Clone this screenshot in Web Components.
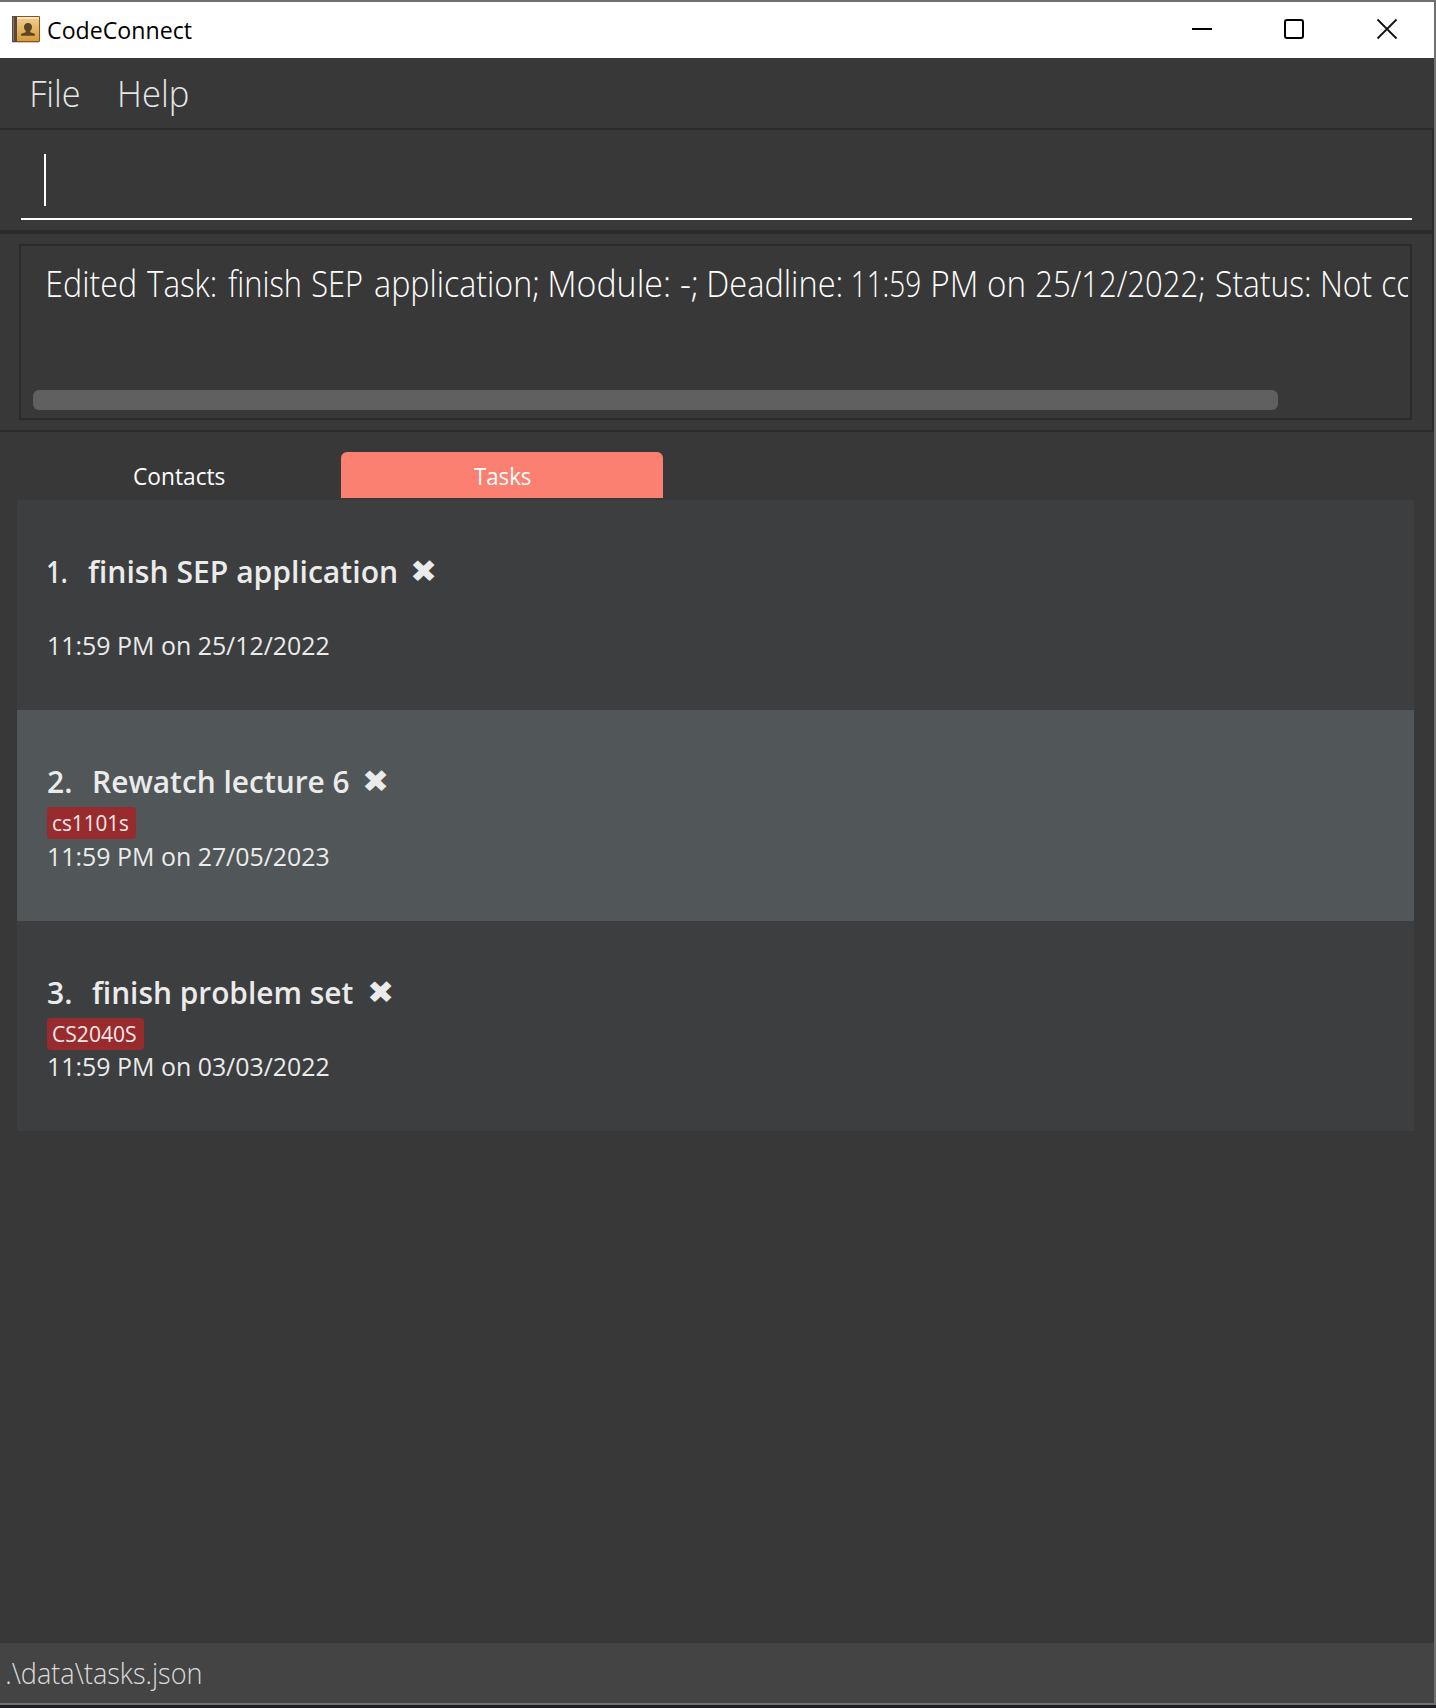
<!DOCTYPE html>
<html lang="en">
<head>
<meta charset="utf-8">
<title>CodeConnect</title>
<style>
html,body{margin:0;height:100%;background:#383838;overflow:hidden}
body{font-family:"Open Sans","Noto Sans",sans-serif}
</style>
</head>
<body>
<code-connect></code-connect>
<script>
const make = (name, html, init) => customElements.define(name, class extends HTMLElement {
  constructor(){ super(); this.attachShadow({mode:'open'}).innerHTML = html; }
  connectedCallback(){ if (init) init.call(this, this.shadowRoot); }
});

/* One line of text whose inked glyphs span exactly the width given in "span". */
make('ink-text', `<style>
:host{display:block;flex:none;white-space:nowrap}
span{display:inline-block;transform-origin:0 50%}
</style><span><slot></slot></span>`, function(root){
  const cs = getComputedStyle(this), c = document.createElement('canvas').getContext('2d');
  c.font = `${cs.fontWeight} ${cs.fontSize} ${cs.fontFamily}`;
  const m = c.measureText(this.textContent);
  const k = this.getAttribute('span') / (m.actualBoundingBoxLeft + m.actualBoundingBoxRight);
  this.style.width = this.getAttribute('span') + 'px';
  root.querySelector('span').style.transform = `translateX(${m.actualBoundingBoxLeft * k}px) scaleX(${k})`;
});

make('title-bar', `<style>
:host{display:flex;align-items:center;height:56px;background:#fff;color:#000;box-sizing:border-box;padding:0 36px 0 11px;font-size:24px;line-height:36px}
.app{margin-right:7px;display:block}
.controls{display:flex;margin-left:auto;gap:71px;margin-top:-2px}
.controls svg{display:block}
.controls svg:first-child{margin-right:-1px}
</style>
<svg class="app" width="30" height="30" viewBox="0 0 30 30">
<defs><linearGradient id="g" x2="0" y2="1"><stop stop-color="#edc98a"/><stop offset=".5" stop-color="#e3b35f"/><stop offset="1" stop-color="#d69b3b"/></linearGradient></defs>
<path d="M1 27h27v1H2z" fill="#c9c9c9"/>
<rect x="1" y="1" width="28" height="26" rx="1" fill="#83551f"/>
<rect x="6" y="2" width="22" height="2" fill="#f7e5bd"/>
<rect x="6" y="4" width="22" height="22" fill="url(#g)"/>
<rect x="1" y="1" width="5" height="26" fill="#5b473b"/><rect x="2" y="2" width="1" height="24" fill="#8d7768"/>
<path d="M17 8c2.600 0 4 1.700 4 4 0 1.700-.7 3.100-1.800 4v1.200l3.800 1.400c.8.300 1 .9 1 2.200H10c0-1.300.2-1.900 1-2.200l3.800-1.400V16c-1.100-.9-1.800-2.300-1.800-4 0-2.300 1.400-4 4-4z" fill="#5c4427"/>
</svg>
<ink-text span="143.500">CodeConnect</ink-text>
<div class="controls">
<svg width="22" height="22" viewBox="0 0 22 22"><path d="M1 11h20" stroke="#000" stroke-width="2"/></svg>
<svg width="22" height="22" viewBox="0 0 22 22"><rect x="2" y="2" width="18" height="18" rx="2" fill="none" stroke="#000" stroke-width="2"/></svg>
<svg width="22" height="22" viewBox="0 0 22 22"><path d="M1.500 1.500l19 19M20.500 1.500l-19 19" stroke="#111" stroke-width="1.800"/></svg>
</div>`);

make('menu-bar', `<style>
:host{display:flex;align-items:center;height:70px;box-sizing:border-box;padding:1px 32px 0 31.500px;gap:41px;font-size:36px;line-height:50px;font-weight:300;color:#e6e6e6}
</style><ink-text span="47">File</ink-text><ink-text span="68">Help</ink-text>`);

make('command-box', `<style>
:host{display:block;height:104px;box-sizing:border-box;border:solid #2b2b2b;border-width:2px 2px 2px 0;padding:0 20px 0 21px}
.field{height:90px;box-sizing:border-box;border-bottom:2px solid #fff;padding:24px 0 0 23px}
.caret{width:2px;height:52px;background:#fff}
</style><div class="field"><div class="caret"></div></div>`);

make('result-display', `<style>
:host{display:block;height:200px;box-sizing:border-box;border:solid #2b2b2b;border-width:2px 2px 2px 0;padding:10px 20px 10px 19px}
.box{height:176px;box-sizing:border-box;border:2px solid #2b2b2b;padding:13px 2px 8px 12px;display:flex;flex-direction:column;justify-content:space-between}
.line{display:flex;gap:12.500px;overflow:hidden;padding-left:14.500px;font-size:36px;line-height:50px;font-weight:300;color:#fff}
.thumb{width:1245px;height:20px;border-radius:6px;background:#606060}
</style><div class="box"><div class="line">
<ink-text span="87">Edited</ink-text> <ink-text span="68">Task:</ink-text> <ink-text span="72">finish</ink-text> <ink-text span="50">SEP</ink-text> <ink-text span="162.500">application;</ink-text> <ink-text span="146.500">Module: -;</ink-text> <ink-text span="132">Deadline:</ink-text> <ink-text span="67">11:59</ink-text> <ink-text span="91">PM on</ink-text> <ink-text span="167.500">25/12/2022;</ink-text> <ink-text span="156">Status: Not</ink-text> <ink-text span="147" style="margin-left:-1.500px">completed</ink-text>
</div><div class="thumb"></div></div>`);

make('tab-item', `<style>
:host{display:flex;align-items:center;justify-content:center;height:46px;box-sizing:border-box;padding-top:2px;border-radius:6px 6px 0 0;font-size:24px;line-height:36px;color:#fff}
:host([selected]){background:#fb8072}
</style><slot></slot>`);

make('tab-strip', `<style>
:host{display:flex;padding:20px 0 2px 17px}
.a{width:324px}.b{width:322px}
</style><tab-item class="a"><ink-text span="91">Contacts</ink-text></tab-item><tab-item class="b" selected><ink-text span="57">Tasks</ink-text></tab-item>`);

make('task-card', `<style>
:host{display:block;height:210px;box-sizing:border-box;padding:49px 0 0 30px;background:#3c3e3f;color:#ebebeb}
:host([alt]){height:211px;background:#515658}
.title{display:flex;height:44px;line-height:44px;font-size:31px;font-weight:600;padding-left:1px}
.mark{margin-left:16px;font-family:"DejaVu Sans",sans-serif;font-weight:400}
:host([alt]) .mark{margin-left:15px}
.tags{display:flex;height:32px;margin-top:4px}
.date{font-size:26px;line-height:32px;padding-left:2px}
:host([alt]) .date{padding-top:1px}
</style>
<div class="title"><slot name="num"></slot><slot name="name"></slot><ink-text class="mark" span="23">✖</ink-text></div>
<div class="tags"><slot name="tag"></slot></div>
<div class="date"><slot name="date"></slot></div>`);

make('module-tag', `<style>
:host{display:block;height:32px;border-radius:4px;background:#992b2e;color:#f3e9e9;font-size:22px;line-height:31px;padding:0 7px 0 6px}
</style><slot></slot>`);

make('task-list', `<style>
:host{display:block;width:1397px;margin-left:17px;flex:1}
ink-text[slot=name]{margin-left:21px}
task-card[alt] ink-text[slot=name]{margin-left:23px}
</style>
<task-card><ink-text slot="num" span="18.500">1.</ink-text><ink-text slot="name" span="308.500">finish SEP application</ink-text><ink-text slot="date" span="280">11:59 PM on 25/12/2022</ink-text></task-card>
<task-card alt><ink-text slot="num" span="23">2.</ink-text><ink-text slot="name" span="255">Rewatch lecture 6</ink-text><module-tag slot="tag"><ink-text span="75.500">cs1101s</ink-text></module-tag><ink-text slot="date" span="280">11:59 PM on 27/05/2023</ink-text></task-card>
<task-card><ink-text slot="num" span="23">3.</ink-text><ink-text slot="name" span="261">finish problem set</ink-text><module-tag slot="tag"><ink-text span="83.500">CS2040S</ink-text></module-tag><ink-text slot="date" span="280">11:59 PM on 03/03/2022</ink-text></task-card>`);

make('status-footer', `<style>
:host{display:flex;align-items:center;height:60px;box-sizing:border-box;padding-left:6.500px;background:#444;color:#dcdcdc;font-size:30px;line-height:42px;font-weight:300}
</style><ink-text span="194">.\\data\\tasks.json</ink-text>`);

make('code-connect', `<style>
:host{display:flex;flex-direction:column;width:1436px;height:1708px;background:#383838;box-sizing:border-box;border-bottom:3px solid #1d1d22}
.window{display:flex;flex-direction:column;flex:1;border:solid #707070;border-width:2px 2px 2px 0}
</style><div class="window"><title-bar></title-bar><menu-bar></menu-bar><command-box></command-box><result-display></result-display><tab-strip></tab-strip><task-list></task-list><status-footer></status-footer></div>`);
</script>
</body>
</html>
